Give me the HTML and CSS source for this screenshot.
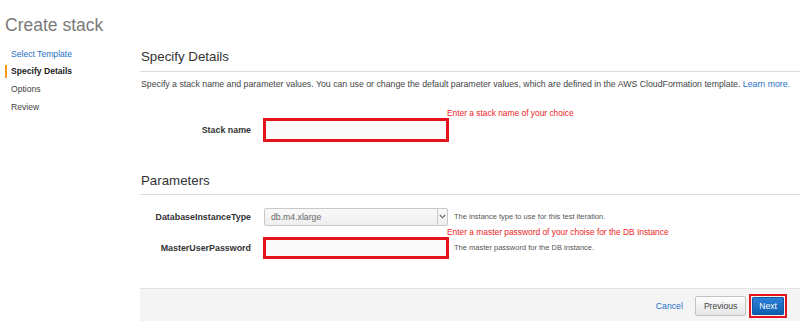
FILE: index.html
```html
<!DOCTYPE html>
<html lang="en">
<head>
<meta charset="utf-8">
<title>Create stack</title>
<link rel="stylesheet" href="styles.css">
</head>
<body>
<h1 class="page-title">Create stack</h1>
<div class="layout">
  <nav class="steps">
    <a class="step step-link" href="#">Select Template</a>
    <span class="step step-active">Specify Details</span>
    <span class="step">Options</span>
    <span class="step">Review</span>
  </nav>
  <main class="main">
    <h2 class="section-title">Specify Details</h2>
    <p class="desc">Specify a stack name and parameter values. You can use or change the default parameter values, which are defined in the AWS CloudFormation template. <a class="link" href="#">Learn more.</a></p>

    <div class="note note-first">Enter a stack name of your choice</div>
    <div class="row row-stack">
      <label class="label">Stack name</label>
      <div class="input input-stack"></div>
    </div>

    <h2 class="section-title section-params">Parameters</h2>
    <div class="row row-select">
      <label class="label">DatabaseInstanceType</label>
      <div class="select">
        <span class="select-value">db.m4.xlarge</span>
        <span class="select-arrow">
          <svg width="7" height="5" viewBox="0 0 7 5"><path d="M0.8 1 L3.5 3.8 L6.2 1" fill="none" stroke="#666" stroke-width="1.1"/></svg>
        </span>
      </div>
      <span class="help">The instance type to use for this test iteration.</span>
    </div>
    <div class="note">Enter a master password of your choise for the DB Instance</div>
    <div class="row row-pass">
      <label class="label">MasterUserPassword</label>
      <div class="input input-pass"></div>
      <span class="help">The master password for the DB instance.</span>
    </div>

    <footer class="footer">
      <a class="cancel" href="#">Cancel</a>
      <button class="btn btn-prev" type="button">Previous</button>
      <span class="next-mark"><button class="btn btn-next" type="button">Next</button></span>
    </footer>
  </main>
</div>
</body>
</html>
```

FILE: styles.css
```css
* { box-sizing: border-box; }
html, body { margin: 0; padding: 0; background: #fff; }
body {
  font-family: "Liberation Sans", Arial, sans-serif;
  width: 800px;
  height: 321px;
  overflow: hidden;
  color: #444;
}
a { text-decoration: none; }

.page-title {
  margin: 0;
  padding: 15px 0 0 5px;
  font-size: 17.5px;
  line-height: 20px;
  font-weight: normal;
  color: #7a7a7a;
}

.layout {
  display: flex;
}

.steps {
  width: 140px;
  flex: none;
  display: flex;
  flex-direction: column;
  align-items: flex-start;
  padding-top: 12.8px;
  gap: 4.7px;
}
.step {
  font-size: 8.6px;
  line-height: 13px;
  padding-left: 11px;
  color: #444;
}
.step-link { color: #1f6fcb; }
.step-active {
  font-weight: bold;
  color: #222;
  margin-left: 5px;
  padding-left: 4px;
  border-left: 2px solid #f7981d;
}

.main {
  flex: 1;
  min-width: 0;
  display: flex;
  flex-direction: column;
}

.section-title {
  margin: 13.6px 0 0;
  padding: 0 0 6.4px 1px;
  font-size: 13.3px;
  line-height: 16px;
  font-weight: normal;
  color: #333;
  border-bottom: 1px solid #dcdcdc;
}
.section-params {
  margin-top: 30.6px;
  padding-bottom: 5px;
}

.desc {
  margin: 6px 0 0;
  padding-left: 1px;
  font-size: 8.75px;
  line-height: 12px;
  color: #444;
  white-space: nowrap;
}
.link { color: #1f6fcb; }

.note {
  padding-left: 307px;
  font-size: 8.4px;
  line-height: 10px;
  color: #ee1c25;
  margin-top: 1.4px;
}
.note-first { margin-top: 18px; }

.row {
  display: flex;
  align-items: center;
}
.label {
  width: 111px;
  margin-right: 12px;
  text-align: right;
  font-size: 8.9px;
  font-weight: bold;
  color: #333;
}
.input {
  width: 186px;
  border: 3px solid #e5131d;
  background: #fafafa;
}
.input-stack { height: 24px; }
.input-pass { height: 22px; }

.row-select { margin-top: 13px; }
.select {
  width: 184px;
  height: 18px;
  margin-left: 1px;
  display: flex;
  border: 1px solid #c8c8c8;
  border-radius: 2px;
  background: linear-gradient(#f9f9f9, #efefef);
}
.select-value {
  flex: 1;
  padding-left: 6px;
  font-size: 8.7px;
  line-height: 16px;
  color: #666;
}
.select-arrow {
  width: 10px;
  border-left: 1px solid #c8c8c8;
  display: flex;
  align-items: center;
  justify-content: center;
}
.help {
  margin-left: 5px;
  font-size: 7.5px;
  color: #555;
}
.row-select .help { margin-left: 6px; }

.footer {
  margin-top: 29px;
  height: 33px;
  border-top: 1px solid #e3e3e3;
  background: #f4f4f4;
  display: flex;
  justify-content: flex-end;
  align-items: center;
  padding: 3px 13px 0 0;
}
.cancel {
  font-size: 8.7px;
  color: #1f6fcb;
  margin-right: 12px;
}
.btn {
  font-family: "Liberation Sans", Arial, sans-serif;
  font-size: 8.6px;
  margin: 0;
  cursor: pointer;
}
.btn-prev {
  height: 20px;
  padding: 0 8px;
  border: 1px solid #c2c2c2;
  border-radius: 2px;
  background: linear-gradient(#fdfdfd, #e6e6e6);
  color: #444;
  margin-right: 3px;
}
.next-mark {
  display: flex;
  border: 2px solid #e5131d;
  padding: 1px;
}
.btn-next {
  height: 18px;
  padding: 0 6px;
  border: 1px solid #0d58a6;
  border-radius: 1px;
  background: linear-gradient(#2d7fd6, #0f5fb0);
  color: #fff;
}
```
